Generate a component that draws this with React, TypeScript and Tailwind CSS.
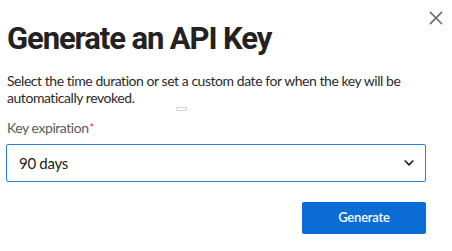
function CloseIcon() {
  return (
    <svg width="14" height="14" viewBox="0 0 14 14" fill="none" stroke="#6b6b6b" strokeWidth="1.6" strokeLinecap="square">
      <path d="M1.5 1.5 L12.5 12.5 M12.5 1.5 L1.5 12.5" />
    </svg>
  );
}

function Chevron() {
  return (
    <svg width="10" height="6" viewBox="0 0 10 6" fill="none" stroke="#222" strokeWidth="1.7" strokeLinecap="round" strokeLinejoin="round">
      <path d="M1.2 1 L5 4.8 L8.8 1" />
    </svg>
  );
}

export default function App() {
  return (
    <div className="relative w-[452px] h-[251px] bg-white font-['Lato',sans-serif] overflow-hidden">
      <button className="absolute left-[429px] top-[11px] p-0" title="Close">
        <CloseIcon />
      </button>

      <div className="flex flex-col pl-[6px] pt-[19px] w-[426px]">
        <h1 className="pl-[1px] font-['Roboto',sans-serif] text-[31px] leading-[40px] font-bold tracking-[-1.1px] text-[#222] whitespace-nowrap">
          Generate an API Key
        </h1>

        <p className="mt-[13px] pl-[1px] text-[14px] leading-[17px] tracking-[-0.45px] text-[#2b2b2b]">
          Select the time duration or set a custom date for when the key will be automatically revoked.
        </p>

        {/* stray drag handle */}
        <div className="ml-[170px] mt-[1px] w-[11px] h-[4px] border border-[#d0d0d0] rounded-[1px]" />

        <label className="mt-[8px] pl-[1px] text-[14px] leading-[17px] tracking-[-0.45px] text-[#5a5a5a]">
          Key expiration<span className="text-[#e0262b] text-[11px] align-top ml-[1px]">*</span>
        </label>

        <div className="mt-[8px] h-[38px] flex items-center justify-between pl-[12px] pr-[11px] border border-[#2f80d8] rounded-[2px]">
          <span className="text-[15px] tracking-[-0.3px] text-[#222]">90 days</span>
          <Chevron />
        </div>

        <div className="mt-[20px] flex justify-end">
          <button className="w-[124px] h-[32px] rounded-[2px] bg-[#0a6cd4] text-white text-[13px] font-semibold tracking-[-0.2px]">
            Generate
          </button>
        </div>
      </div>
    </div>
  );
}
